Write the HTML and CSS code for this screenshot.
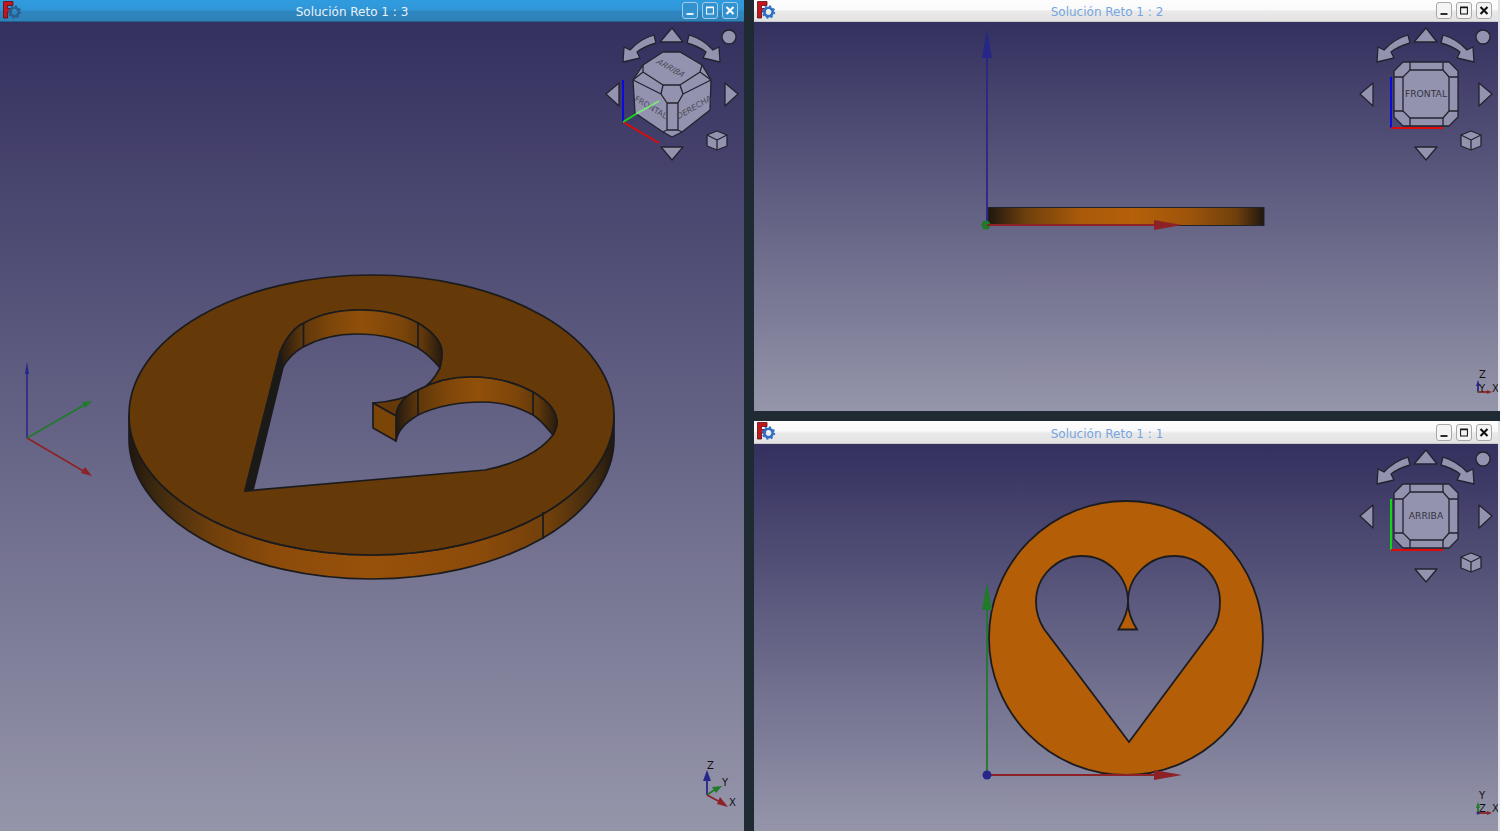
FILE: index.html
```html
<!DOCTYPE html>
<html lang="es">
<head>
<meta charset="utf-8">
<title>Solución Reto 1</title>
<link rel="stylesheet" href="styles.css">
</head>
<body>
<svg class="sprites" width="0" height="0" aria-hidden="true">
  <defs>
    <linearGradient id="g-side" gradientUnits="userSpaceOnUse" x1="129" y1="0" x2="614" y2="0">
      <stop offset="0" stop-color="#20170e"/><stop offset=".06" stop-color="#3f2a10"/><stop offset=".17" stop-color="#6f3f0b"/>
      <stop offset=".3" stop-color="#8c4b0a"/><stop offset=".5" stop-color="#97510a"/><stop offset=".72" stop-color="#8c4b0a"/>
      <stop offset=".87" stop-color="#6f3f0b"/><stop offset=".96" stop-color="#3f2a10"/><stop offset="1" stop-color="#20170e"/>
    </linearGradient>
    <linearGradient id="g-wall1" gradientUnits="userSpaceOnUse" x1="280" y1="0" x2="442" y2="0">
      <stop offset="0" stop-color="#241a0f"/><stop offset=".14" stop-color="#5f370b"/><stop offset=".3" stop-color="#7c4509"/>
      <stop offset=".5" stop-color="#91500a"/><stop offset=".75" stop-color="#7c4509"/><stop offset=".88" stop-color="#5f370b"/><stop offset="1" stop-color="#241a0f"/>
    </linearGradient>
    <linearGradient id="g-wall2" gradientUnits="userSpaceOnUse" x1="396" y1="0" x2="558" y2="0">
      <stop offset="0" stop-color="#241a0f"/><stop offset=".14" stop-color="#5f370b"/><stop offset=".3" stop-color="#7c4509"/>
      <stop offset=".5" stop-color="#91500a"/><stop offset=".75" stop-color="#7c4509"/><stop offset=".88" stop-color="#5f370b"/><stop offset="1" stop-color="#241a0f"/>
    </linearGradient>
    <linearGradient id="g-bar" gradientUnits="userSpaceOnUse" x1="988" y1="0" x2="1264" y2="0">
      <stop offset="0" stop-color="#1f1710"/><stop offset=".14" stop-color="#6f400c"/><stop offset=".33" stop-color="#a8590a"/>
      <stop offset=".52" stop-color="#b5600a"/><stop offset=".72" stop-color="#a0550a"/><stop offset=".9" stop-color="#6f400c"/><stop offset="1" stop-color="#1f1710"/>
    </linearGradient>

    <g id="nav-arrows" class="nav-part">
      <path d="M0 -66 L11 -52 L-12 -52 Z"/>
      <path d="M-11 53 L11 53 L0 66 Z"/>
      <path d="M-53 -11 L-53 12 L-66 0 Z"/>
      <path d="M53 -11 L53 12 L66 0 Z"/>
      <circle cx="57" cy="-57" r="7"/>
      <path d="M-18 -59 L-16 -51 Q-27 -48 -35 -42 L-32 -36 L-49 -32 L-48 -47 L-42 -44 Q-32 -55 -18 -59 Z"/>
      <path d="M17 -59 L15 -51 Q26 -48 34 -42 L31 -36 L48 -32 L47 -47 L41 -44 Q31 -55 17 -59 Z"/>
      <path d="M45 37 L55 41 L55 52 L45 56 L35 52 L35 41 Z"/>
      <path class="lines" d="M35 41 L45 46 L55 41 M45 46 L45 56"/>
    </g>

    <g id="cube-iso" class="nav-part">
      <path d="M-9 -42 L8 -42 L30 -29 L39 -14 L38 16 L10 38 L0 43 L-9 38 L-37 19 L-39 -14 L-29 -29 Z"/>
      <path class="lines" d="M-29 -22 L-9 -9 L8 -9 L28 -22 M-29 -29 L-29 -22 L-39 -14 M30 -29 L28 -22 L39 -14 M-9 -9 L-11 0 L-39 -14 M8 -9 L11 0 L39 -14 M-11 0 L-5 9 L6 9 L11 0 M-5 9 L-5 36 L6 36 L6 9 M-9 38 L-5 36 M10 38 L6 36"/>
      <text class="cube-label" y="3" transform="translate(-1 -26) rotate(29) skewX(-24)">ARRIBA</text>
      <text class="cube-label" y="3" transform="translate(-21 13) rotate(31) skewX(8)">FRONTAL</text>
      <text class="cube-label" y="3" transform="translate(22 13) rotate(-30) skewX(-8)">DERECHA</text>
    </g>

    <g id="cube-flat" class="nav-part">
      <path d="M-23 -32 L23 -32 L32 -23 L32 23 L23 32 L-23 32 L-32 23 L-32 -23 Z"/>
      <path d="M-16 -24 L17 -24 L23 -17 L23 17 L17 24 L-16 24 L-23 17 L-23 -17 Z"/>
      <path class="lines" d="M-16 -32 L-16 -24 M17 -32 L17 -24 M-32 -17 L-23 -17 M-32 17 L-23 17 M32 -17 L23 -17 M32 17 L23 17 M-16 32 L-16 24 M17 32 L17 24"/>
    </g>

    <g id="gear">
      <circle cx="0" cy="0" r="4.2" fill="none" stroke="currentColor" stroke-width="2.6"/>
      <circle cx="0" cy="0" r="5.8" fill="none" stroke="currentColor" stroke-width="1.8" stroke-dasharray="2 2.55"/>
    </g>
    <g id="app-logo">
      <path d="M3.5 1.5 H13 V5.5 H7.5 V8.5 H11.5 V12 H7.5 V18 H3.5 Z" fill="#c4161f" stroke="#5c0d12" stroke-width=".8"/>
      <use href="#gear" x="14.5" y="12"/>
    </g>
  </defs>
</svg>

<main class="desk">
  <section class="window window-main">
    <header class="titlebar titlebar-active">
      <svg class="app-icon" viewBox="0 0 22 22"><use href="#app-logo"/></svg>
      <span class="title">Solución Reto 1 : 3</span>
      <div class="buttons">
        <button class="win-btn"><svg viewBox="0 0 16 16"><path d="M4 11 H12 V13 H4 Z"/></svg></button>
        <button class="win-btn"><svg viewBox="0 0 16 16"><path d="M3.5 3.5 H12.5 V12.5 H3.5 Z M4.7 5.5 V11.3 H11.3 V5.5 Z" fill-rule="evenodd"/></svg></button>
        <button class="win-btn"><svg viewBox="0 0 16 16"><path class="x-mark" d="M4 4 L12 12 M12 4 L4 12"/></svg></button>
      </div>
    </header>
    <div class="viewport">
      <svg class="scene" viewBox="0 22 744 809">
        <g class="outline">
          <path fill="url(#g-side)" d="M129 415 L129 439 A242.500 140 0 0 0 614 439 L614 415 A242.500 140 0 0 1 129 415 Z"/>
          <path class="top-face" fill-rule="evenodd" d="M129 415 A242.500 140 0 0 1 614 415 A242.500 140 0 0 1 129 415 Z
            M245 491 L280 352 C287 335 297 326 304 323 C320 314 340 310 360 310 C385 310 405 316 418 323 C433 332 442 343 442 353 C442 358 441 364 440 368 C435 378 428 386 420 390 C407 398 390 402 373 403 L396 416 C397 405 405 395 418 390 C435 381 452 377 470 377 C495 377 517 383 533 392 C548 401 557 412 557 423 C557 427 555 431 553 435 C541 451 516 464 485 470 Z"/>
          <path fill="url(#g-wall1)" d="M280 352 C287 335 297 326 304 323 C320 314 340 310 360 310 C385 310 405 316 418 323 C433 332 442 343 442 353 C442 358 441 364 440 368 C432 358 426 353 418 348 C403 340 382 334 357 334 C338 334 318 339 303 347 C296 351 288 358 283 367 Z"/>
          <path fill="#1b1a16" d="M245 491 L280 352 L283 367 L253 490 Z"/>
          <path fill="url(#g-wall2)" d="M396 416 C397 405 405 395 418 390 C435 381 452 377 470 377 C495 377 517 383 533 392 C548 401 557 412 557 423 C557 427 555 431 553 435 C546 427 541 420 533 415 C517 406 500 402 483 402 C460 402 437 406 418 415 C405 423 398 430 396 441 Z"/>
          <path fill="#7c4508" d="M373 403 L396 416 L396 441 L373 428 Z"/>
          <path d="M303.500 323 V347 M418 323 V348 M418 390 V415 M533 392 V415 M543 512 V539" fill="none"/>
        </g>

        <g class="axis axis-thin">
          <path class="z-ax" d="M27 438 V370"/><path class="z-head" d="M27 362 L29 374 H25 Z"/>
          <path class="y-ax" d="M27 438 L86 404"/><path class="y-head" d="M92 401 L85 408 L82 402 Z"/>
          <path class="x-ax" d="M27 438 L85 472"/><path class="x-head" d="M92 476 L81 473 L85 467 Z"/>
        </g>

        <use href="#nav-arrows" x="672" y="94"/>
        <path class="nav-ax blue" d="M623 122 V80"/>
        <path class="nav-ax red" d="M623 122 L659 143"/>
        <use href="#cube-iso" x="672" y="94"/>
        <path class="nav-ax green" d="M623 122 L636 114"/>
        <path class="nav-ax green-lite" d="M636 114 L659 101"/>

        <g class="axis">
          <path class="z-ax" d="M707 795 V778"/><path class="z-head" d="M707 770 L711 781 H703 Z"/>
          <path class="y-ax" d="M707 795 L717 788"/><path class="y-head" d="M722 786 L716 793 L712 787 Z"/>
          <path class="x-ax" d="M707 795 L722 803"/><path class="x-head" d="M728 807 L717 804 L720 797 Z"/>
          <text class="ax-label" x="707" y="769">Z</text>
          <text class="ax-label" x="722" y="786">Y</text>
          <text class="ax-label" x="729" y="806">X</text>
        </g>
      </svg>
    </div>
  </section>

  <section class="window window-side">
    <header class="titlebar">
      <svg class="app-icon" viewBox="0 0 22 22"><use href="#app-logo"/></svg>
      <span class="title">Solución Reto 1 : 2</span>
      <div class="buttons">
        <button class="win-btn"><svg viewBox="0 0 16 16"><path d="M4 11 H12 V13 H4 Z"/></svg></button>
        <button class="win-btn"><svg viewBox="0 0 16 16"><path d="M3.500 3.500 H12.500 V12.500 H3.500 Z M4.700 5.500 V11.300 H11.300 V5.500 Z" fill-rule="evenodd"/></svg></button>
        <button class="win-btn"><svg viewBox="0 0 16 16"><path class="x-mark" d="M4 4 L12 12 M12 4 L4 12"/></svg></button>
      </div>
    </header>
    <div class="viewport">
      <svg class="scene" viewBox="754 22 744 389">
        <rect class="edge" x="988" y="207.500" width="276" height="18" fill="url(#g-bar)"/>
        <g class="axis">
          <path class="z-ax" d="M987 225 V50"/><path class="z-head" d="M987 30 L992 58 H982 Z"/>
          <circle class="y-head" cx="986" cy="225" r="4.500"/>
          <path class="x-ax" d="M987 225 H1160"/><path class="x-head" d="M1182 225 L1154 220 V230 Z"/>
        </g>
        <use href="#nav-arrows" x="1426" y="94"/>
        <use href="#cube-flat" x="1426" y="94"/>
        <text class="flat-label" x="1426" y="97">FRONTAL</text>
        <path class="nav-ax blue" d="M1391 128 V77"/>
        <path class="nav-ax red" d="M1391 128 H1443"/>
        <g class="axis">
          <path class="z-ax" d="M1478 392 V384"/><path class="z-head" d="M1478 380 L1480 386 H1476 Z"/>
          <path class="x-ax" d="M1478 392 H1488"/><path class="x-head" d="M1492 392 L1487 390 V394 Z"/>
          <circle class="y-head" cx="1478" cy="392" r="1"/>
          <text class="ax-label" x="1479" y="378">Z</text>
          <text class="ax-label" x="1479" y="392">Y</text>
          <text class="ax-label" x="1492" y="392">X</text>
        </g>
      </svg>
    </div>
  </section>

  <section class="window window-side">
    <header class="titlebar titlebar-tall">
      <svg class="app-icon" viewBox="0 0 22 22"><use href="#app-logo"/></svg>
      <span class="title">Solución Reto 1 : 1</span>
      <div class="buttons">
        <button class="win-btn"><svg viewBox="0 0 16 16"><path d="M4 11 H12 V13 H4 Z"/></svg></button>
        <button class="win-btn"><svg viewBox="0 0 16 16"><path d="M3.500 3.500 H12.500 V12.500 H3.500 Z M4.700 5.500 V11.300 H11.300 V5.500 Z" fill-rule="evenodd"/></svg></button>
        <button class="win-btn"><svg viewBox="0 0 16 16"><path class="x-mark" d="M4 4 L12 12 M12 4 L4 12"/></svg></button>
      </div>
    </header>
    <div class="viewport">
      <svg class="scene" viewBox="754 444 744 387">
        <path class="plate" fill-rule="evenodd" d="M989 638 A137 137 0 0 1 1263 638 A137 137 0 0 1 989 638 Z
          M1118.500 629.500 C1124 620 1128 612 1128 602 A46 46 0 0 0 1036 602 C1036 612 1039 621 1044 629 L1129 742 L1213 629 C1218 621 1220 612 1220 602 A46 46 0 0 0 1128 602 C1128 612 1131 620 1137 629.500 Z"/>
        <g class="axis">
          <path class="y-ax" d="M987 775 V605"/><path class="y-head" d="M987 583 L992 610 H982 Z"/>
          <path class="x-ax" d="M987 775 H1160"/><path class="x-head" d="M1182 775 L1154 770 V780 Z"/>
          <circle class="z-head" cx="987" cy="775" r="4.500"/>
        </g>
        <use href="#nav-arrows" x="1426" y="516"/>
        <use href="#cube-flat" x="1426" y="516"/>
        <text class="flat-label" x="1426" y="519">ARRIBA</text>
        <path class="nav-ax bright-green" d="M1391 550 V499"/>
        <path class="nav-ax red" d="M1391 550 H1443"/>
        <g class="axis">
          <path class="y-ax" d="M1478 813 V806"/><path class="y-head" d="M1478 802 L1480 808 H1476 Z"/>
          <path class="x-ax" d="M1478 813 H1488"/><path class="x-head" d="M1492 813 L1487 811 V815 Z"/>
          <circle class="z-head" cx="1478" cy="813" r="1.500"/>
          <text class="ax-label" x="1479" y="799">Y</text>
          <text class="ax-label" x="1479" y="812">Z</text>
          <text class="ax-label" x="1492" y="812">X</text>
        </g>
      </svg>
    </div>
  </section>
</main>
</body>
</html>
```

FILE: styles.css
```css
* { box-sizing: border-box; }

html, body {
  margin: 0;
  height: 100%;
  overflow: hidden;
}

body {
  background: #202a33;
  font-family: "DejaVu Sans", sans-serif;
}

.sprites {
  position: absolute;
}

.desk {
  display: grid;
  grid-template-columns: 744px 1fr;
  grid-template-rows: 411px 1fr;
  column-gap: 10px;
  row-gap: 10px;
  width: 1500px;
  height: 831px;
  background: #202a33;
}

.window {
  display: flex;
  flex-direction: column;
  min-height: 0;
}

.window-main {
  grid-row: 1 / span 2;
}

.window-side {
  border-right: 2px solid #dfe3e8;
}

.titlebar {
  display: flex;
  align-items: center;
  flex: none;
  height: 22px;
  padding-right: 6px;
  background: linear-gradient(#fdfdfd 0, #fafafa 45%, #e9e9e9 55%, #e3e3e3 100%);
  border-bottom: 1px solid #c9c9c9;
}

.titlebar-tall {
  height: 23px;
}

.titlebar-active {
  background: linear-gradient(#2f9cdf 0, #3097d8 45%, #2e86c0 55%, #2f82b8 95%);
  border-bottom: 1px solid #1f618c;
}

.app-icon {
  flex: none;
  width: 22px;
  height: 22px;
  color: #2f6fc4;
}

.titlebar-active .app-icon {
  color: #2a5f90;
}

.title {
  flex: 1;
  align-self: stretch;
  text-align: center;
  font-size: 12px;
  line-height: 24px;
  color: #76a5e0;
}

.window-side .title {
  padding-left: 2px;
}

.titlebar-tall .title {
  line-height: 26px;
}

.titlebar-active .title {
  color: #e6f3fc;
}

.buttons {
  display: flex;
  gap: 4px;
}

.win-btn {
  display: block;
  width: 16px;
  height: 17px;
  padding: 0;
  background: #f4f4f4;
  border: 1px solid #a8a8a8;
  border-radius: 3px;
}

.win-btn svg {
  display: block;
  width: 14px;
  height: 15px;
  fill: #111;
  stroke: none;
}

.x-mark {
  fill: none;
  stroke: #111;
  stroke-width: 2.4;
}

.titlebar-active .win-btn {
  background: #3291cf;
  border-color: #a6cde8;
}

.titlebar-active .win-btn svg {
  fill: #fff;
}

.titlebar-active .x-mark {
  stroke: #fff;
}

.viewport {
  flex: 1;
  min-height: 0;
  background: linear-gradient(#34305f 0, #9595aa 100%);
}

.scene {
  display: block;
  width: 100%;
  height: 100%;
}

.outline path {
  stroke: #1b1b1e;
  stroke-width: 1.7;
  stroke-linejoin: round;
}

.top-face {
  fill: #663908;
}

.edge {
  stroke: #22222a;
  stroke-width: 1;
}

.plate {
  fill: #b45f08;
  stroke: #1c1c20;
  stroke-width: 1.8;
}

.axis path {
  stroke-width: 0;
}

.axis .z-ax, .axis .y-ax, .axis .x-ax {
  fill: none;
  stroke-width: 1.8;
}

.axis-thin .z-ax, .axis-thin .y-ax, .axis-thin .x-ax {
  stroke-width: 1.6;
}

.z-ax { stroke: #27278a; }
.y-ax { stroke: #1f7a2a; }
.x-ax { stroke: #8c2226; }
.z-head { fill: #27278a; }
.y-head { fill: #1f7a2a; }
.x-head { fill: #8c2226; }

.ax-label {
  font-family: "DejaVu Sans", sans-serif;
  font-size: 10px;
  fill: #111;
}

.nav-part {
  fill: #9393b0;
  stroke: #23232f;
  stroke-width: 1.3;
  stroke-linejoin: round;
}

.nav-part .lines {
  fill: none;
}

.cube-label {
  font-family: "DejaVu Sans", sans-serif;
  font-size: 8px;
  text-anchor: middle;
  fill: #4a4a58;
  stroke: none;
}

.flat-label {
  font-family: "DejaVu Sans", sans-serif;
  font-size: 9.2px;
  text-anchor: middle;
  fill: #33333f;
}

.nav-ax {
  fill: none;
  stroke-width: 2;
}

.blue { stroke: #0a0ae0; }
.red { stroke: #e00a0a; }
.green { stroke: #12d812; }
.green-lite { stroke: #7ce87c; }
.bright-green { stroke: #0fd80f; }
```
